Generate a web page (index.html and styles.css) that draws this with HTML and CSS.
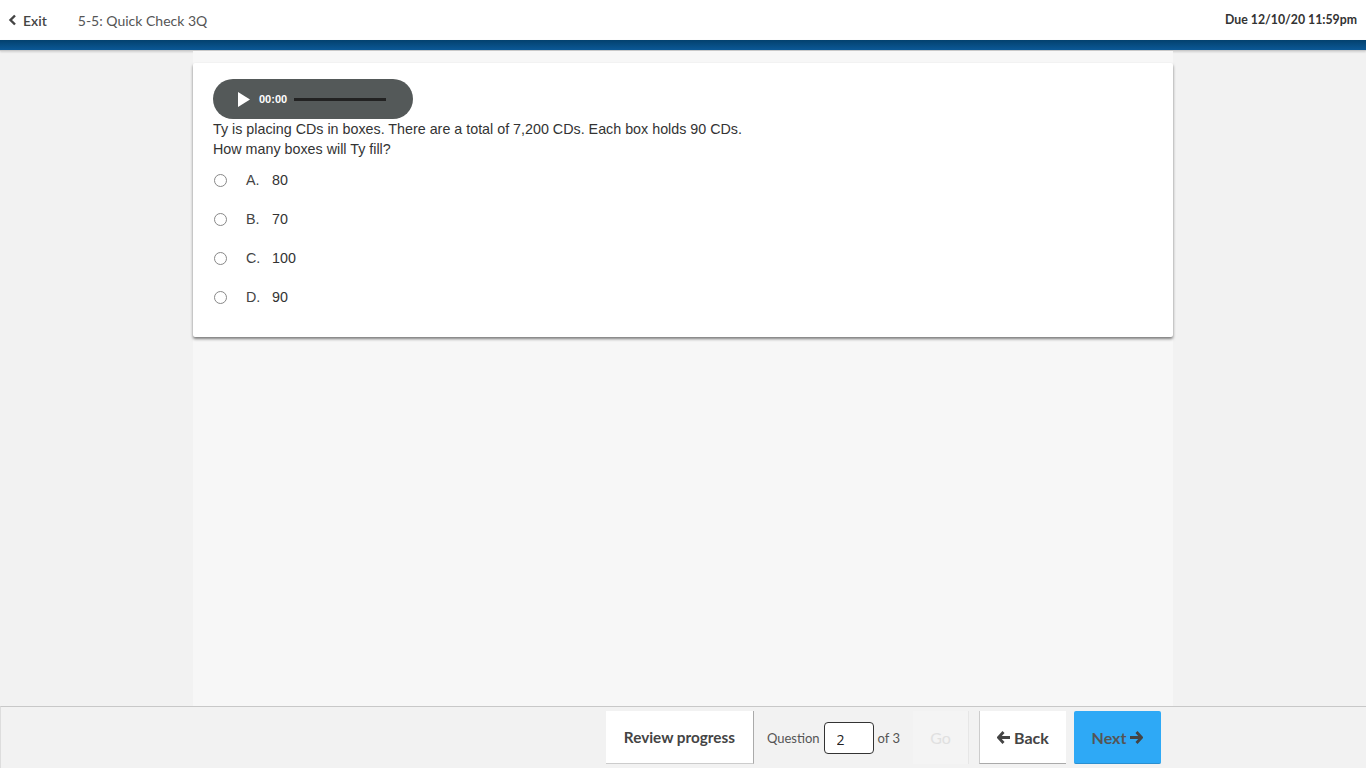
FILE: index.html
```html
<!DOCTYPE html>
<html lang="en">
<head>
    <meta charset="UTF-8">
    <title>5-5: Quick Check 3Q</title>
    <link rel="stylesheet" href="styles.css">
</head>
<body>
    <header class="topbar">
        <a class="exit" href="#">
            <svg width="9" height="12" viewBox="0 0 9 12"><path d="M7 1.5 L2.5 6 L7 10.5" fill="none" stroke="#444" stroke-width="2.4"/></svg>
            Exit
        </a>
        <span class="title">5-5: Quick Check 3Q</span>
        <span class="due">Due 12/10/20 11:59pm</span>
    </header>
    <div class="bluebar"></div>

    <main class="stage">
        <div class="column">
            <section class="card">
                <div class="player">
                    <svg class="play" width="12" height="15" viewBox="0 0 12 15"><path d="M0 0 L12 7.5 L0 15 Z" fill="#fff"/></svg>
                    <span class="time">00:00</span>
                    <span class="track"></span>
                </div>
                <p class="prompt">Ty is placing CDs in boxes. There are a total of 7,200 CDs. Each box holds 90 CDs.<br>How many boxes will Ty fill?</p>
                <ul class="choices">
                    <li><span class="radio"></span><span class="letter">A.</span>80</li>
                    <li><span class="radio"></span><span class="letter">B.</span>70</li>
                    <li><span class="radio"></span><span class="letter">C.</span>100</li>
                    <li><span class="radio"></span><span class="letter">D.</span>90</li>
                </ul>
            </section>
        </div>
    </main>

    <footer class="footer">
        <button class="btn review">Review progress</button>
        <div class="jump">
            <span>Question</span>
            <input class="qnum" type="text" value="2">
            <span>of 3</span>
        </div>
        <button class="btn go" disabled>Go</button>
        <button class="btn back">
            <svg width="14" height="13" viewBox="0 0 14 13"><path d="M6.5 1 L1.5 6.5 L6.5 12 M2 6.5 H13" fill="none" stroke="#444" stroke-width="2.8"/></svg>
            Back
        </button>
        <button class="btn next">
            Next
            <svg width="14" height="13" viewBox="0 0 14 13"><path d="M7.5 1 L12.5 6.5 L7.5 12 M12 6.5 H1" fill="none" stroke="#444" stroke-width="2.8"/></svg>
        </button>
    </footer>
</body>
</html>
```

FILE: styles.css
```css
body {
    margin: 0;
    height: 100vh;
    display: flex;
    flex-direction: column;
    background: #f2f2f2;
    font-family: Lato, 'Open Sans', sans-serif;
    color: #444;
    overflow: hidden;
}

.topbar {
    height: 40px;
    flex: 0 0 40px;
    background: #fff;
    display: flex;
    align-items: center;
    padding: 0 9px 0 8px;
    font-size: 14px;
}

.exit {
    display: flex;
    align-items: center;
    gap: 6px;
    color: #444;
    text-decoration: none;
    font-weight: 600;
}

.title {
    margin-left: 31px;
    color: #555;
}

.due {
    margin-left: auto;
    font-size: 12.3px;
    font-weight: 700;
    color: #333;
    margin-top: -2px;
}

.bluebar {
    flex: 0 0 10px;
    background: linear-gradient(#03416e, #0b5896);
    border-bottom: 1px solid #c9c9c9;
    box-shadow: 0 1px 2px rgba(0, 0, 0, 0.15);
}

.stage {
    flex: 1;
    display: flex;
    justify-content: center;
    min-height: 0;
}

.column {
    width: 980px;
    background: #f7f7f7;
    padding-top: 12px;
}

.card {
    background: #fff;
    padding: 16px 20px 20px;
    box-shadow: 0 2px 3px rgba(0, 0, 0, 0.5);
    border-radius: 2px;
    font-family: 'Liberation Sans', Arial, sans-serif;
    color: #333;
}

.player {
    width: 200px;
    height: 40px;
    border-radius: 20px;
    background: #545959;
    display: flex;
    align-items: center;
    box-sizing: border-box;
    padding-left: 25px;
}

.time {
    margin-left: 9px;
    color: #fff;
    font-size: 11px;
    font-weight: 700;
}

.track {
    margin-left: 7px;
    width: 92px;
    height: 3px;
    background: #222;
}

.prompt {
    margin: 0;
    font-size: 14.3px;
    line-height: 20px;
}

.choices {
    list-style: none;
    margin: 2px 0 0;
    padding: 0;
}

.choices li {
    height: 39px;
    display: flex;
    align-items: center;
    font-size: 14.3px;
    line-height: 1;
}

.radio {
    width: 11px;
    height: 11px;
    border: 1px solid #888;
    border-radius: 50%;
    margin-left: 1px;
    margin-right: 19px;
}

.letter {
    width: 26px;
    color: #444;
}

.footer {
    box-sizing: border-box;
    flex: 0 0 62px;
    border-top: 1px solid #c8c8c8;
    border-left: 1px solid #ddd;
    background: #f2f2f2;
    display: flex;
    align-items: flex-start;
    justify-content: flex-end;
    padding: 4px 205px 0 0;
    font-size: 13px;
}

.btn {
    height: 53px;
    border: none;
    font-family: Lato, 'Open Sans', sans-serif;
    font-size: 16px;
    font-weight: 700;
    color: #444;
    background: #fff;
    cursor: pointer;
    display: flex;
    align-items: center;
    justify-content: center;
    gap: 3px;
}

.review {
    width: 148px;
    font-size: 15.3px;
    border-right: 1px solid #aaa;
    border-bottom: 1px solid #ccc;
}

.jump {
    display: flex;
    align-items: center;
    height: 53px;
    margin-left: 13px;
    gap: 4px;
    color: #555;
}

.qnum {
    width: 50px;
    height: 32px;
    box-sizing: border-box;
    border: 1px solid #333;
    border-radius: 4px;
    padding: 4px 0 0 12px;
    font-family: 'Open Sans', sans-serif;
    font-size: 14px;
    color: #222;
}

.go {
    width: 56px;
    margin-left: 13px;
    background: #f4f4f4;
    color: #e0e0e0;
    font-weight: 400;
    border-right: 1px solid #e6e6e6;
}

.back {
    width: 87px;
    margin-left: 10px;
    border-left: 1px solid #ccc;
    border-bottom: 1px solid #aaa;
}

.next {
    width: 87px;
    margin-left: 8px;
    background: #2ea9f6;
    color: #555;
    border-radius: 2px;
    border-bottom: 1px solid #2a8fd0;
}
```
